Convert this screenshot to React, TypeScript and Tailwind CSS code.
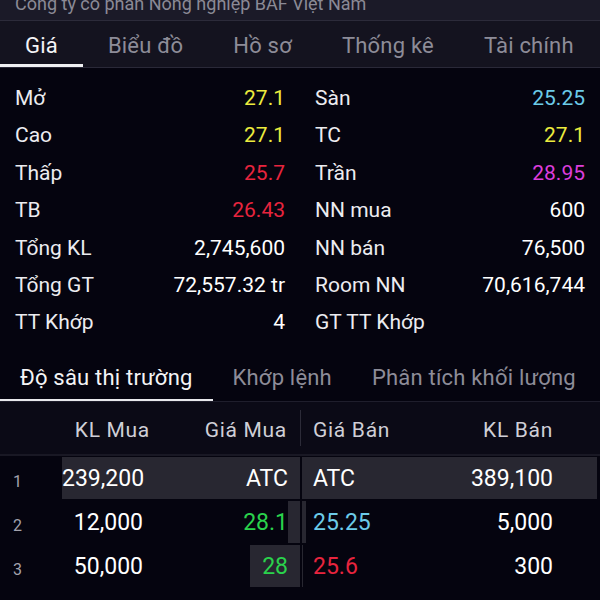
import React from 'react';

type Stat = { label: string; value: string; color?: string };

const leftStats: Stat[] = [
  { label: 'Mở', value: '27.1', color: 'text-[#ecec3e]' },
  { label: 'Cao', value: '27.1', color: 'text-[#ecec3e]' },
  { label: 'Thấp', value: '25.7', color: 'text-[#e8243e]' },
  { label: 'TB', value: '26.43', color: 'text-[#e8243e]' },
  { label: 'Tổng KL', value: '2,745,600' },
  { label: 'Tổng GT', value: '72,557.32 tr' },
  { label: 'TT Khớp', value: '4' },
];

const rightStats: Stat[] = [
  { label: 'Sàn', value: '25.25', color: 'text-[#6ccbe8]' },
  { label: 'TC', value: '27.1', color: 'text-[#ecec3e]' },
  { label: 'Trần', value: '28.95', color: 'text-[#dc3edc]' },
  { label: 'NN mua', value: '600' },
  { label: 'NN bán', value: '76,500' },
  { label: 'Room NN', value: '70,616,744' },
  { label: 'GT TT Khớp', value: '' },
];

type Level = {
  buyVol: number;
  buyPrice: string;
  buyColor: string;
  sellPrice: string;
  sellColor: string;
  sellVol: number;
};

const levels: Level[] = [
  { buyVol: 239200, buyPrice: 'ATC', buyColor: 'text-white', sellPrice: 'ATC', sellColor: 'text-white', sellVol: 389100 },
  { buyVol: 12000, buyPrice: '28.1', buyColor: 'text-[#2ad24c]', sellPrice: '25.25', sellColor: 'text-[#6ccbe8]', sellVol: 5000 },
  { buyVol: 50000, buyPrice: '28', buyColor: 'text-[#2ad24c]', sellPrice: '25.6', sellColor: 'text-[#e8243e]', sellVol: 300 },
];

const fmt = (n: number) => n.toLocaleString('en-US');

const StatColumn: React.FC<{ items: Stat[] }> = ({ items }) => (
  <div className="flex flex-col">
    {items.map((s) => (
      <div key={s.label} className="h-[37.4px] flex items-center justify-between px-[15px] whitespace-nowrap">
        <span className="text-[#ececf0]">{s.label}</span>
        <span className={s.color ?? 'text-white'}>{s.value}</span>
      </div>
    ))}
  </div>
);

export default function App() {
  const maxBuy = Math.max(...levels.map((l) => l.buyVol));
  const maxSell = Math.max(...levels.map((l) => l.sellVol));
  const tabs = ['Giá', 'Biểu đồ', 'Hồ sơ', 'Thống kê', 'Tài chính'];

  return (
    <div className="w-[600px] h-[600px] overflow-hidden bg-[#05040f] text-white font-['Roboto',sans-serif]">
      {/* Company banner (scrolled, cut at the top) */}
      <div className="h-[20px] overflow-hidden bg-[#1b1a28] border-b border-[#2c2b3a] box-content">
        <div className="-mt-[8px] px-[15px] text-[18px] leading-[24px] text-[#8b8a96] whitespace-nowrap">
          Công ty cổ phần Nông nghiệp BAF Việt Nam
        </div>
      </div>

      {/* Main tabs */}
      <div className="h-[47px] flex overflow-hidden bg-[#14131f] border-b border-[#2a2938] text-[22px] tracking-[0.2px] whitespace-nowrap">
        {tabs.map((t, i) => (
          <div
            key={t}
            className={`relative shrink-0 flex items-center pt-[2px] px-[25px] ${i === 0 ? 'text-[#f4f4f6]' : 'text-[#8d8c98]'}`}
          >
            {t}
            {i === 0 && <div className="absolute left-0 right-0 bottom-0 h-[3px] bg-[#f0f0f2]" />}
          </div>
        ))}
      </div>

      {/* Stats */}
      <div className="grid grid-cols-2 pt-[12px] text-[21px]">
        <StatColumn items={leftStats} />
        <StatColumn items={rightStats} />
      </div>

      {/* Sub tabs */}
      <div className="mt-[12px] h-[48px] flex overflow-hidden border-b border-[#1f1e2c] text-[22px] tracking-[0.2px] whitespace-nowrap">
        <div className="relative shrink-0 flex items-center px-[20px] text-[#f4f4f6]">
          Độ sâu thị trường
          <div className="absolute left-0 right-0 bottom-0 h-[2px] bg-[#e8e8ec]" />
        </div>
        <div className="shrink-0 flex items-center px-[20px] text-[#8d8c98]">Khớp lệnh</div>
        <div className="shrink-0 flex items-center px-[20px] text-[#8d8c98]">Phân tích khối lượng</div>
      </div>

      {/* Order book header */}
      <div className="h-[54px] flex items-center pt-[6px] bg-[#0b0a16] border-b-2 border-[#191824] text-[21px] tracking-[0.7px] text-[#cfcfd6] whitespace-nowrap">
        <div className="w-[62px]" />
        <div className="w-[88px] text-right">KL Mua</div>
        <div className="w-[150px] text-right pr-[13px]">Giá Mua</div>
        <div className="w-[1px] h-[36px] -mt-[6px] bg-[#2c2b38]" />
        <div className="flex-1 pl-[12px]">Giá Bán</div>
        <div className="w-[140px] text-right pr-[47px]">KL Bán</div>
      </div>

      {/* Order book rows */}
      <div className="text-[23px] whitespace-nowrap">
        {levels.map((l, i) => (
          <div key={i} className="h-[44px] flex py-[1px]">
            <div className="w-[62px] pl-[13px] pt-[8px] flex items-center text-[16px] text-[#a3a2ad]">{i + 1}</div>
            <div className="relative w-[238px] flex items-center">
              <div
                className="absolute right-0 top-0 bottom-0 bg-[#282731]"
                style={{ width: `${(l.buyVol / maxBuy) * 100}%` }}
              />
              <div className="relative w-[88px] text-right pr-[7px] pt-[4px]">{fmt(l.buyVol)}</div>
              <div className={`relative w-[150px] text-right pr-[12px] pt-[4px] ${l.buyColor}`}>{l.buyPrice}</div>
            </div>
            <div className="w-[2px]" />
            <div className="relative w-[295px] flex items-center">
              <div
                className="absolute left-0 top-0 bottom-0 bg-[#282731]"
                style={{ width: `${(l.sellVol / maxSell) * 100}%` }}
              />
              <div className={`relative flex-1 pl-[11px] pt-[4px] ${l.sellColor}`}>{l.sellPrice}</div>
              <div className="relative text-right pr-[44px] pt-[4px]">{fmt(l.sellVol)}</div>
            </div>
          </div>
        ))}
      </div>
    </div>
  );
}
